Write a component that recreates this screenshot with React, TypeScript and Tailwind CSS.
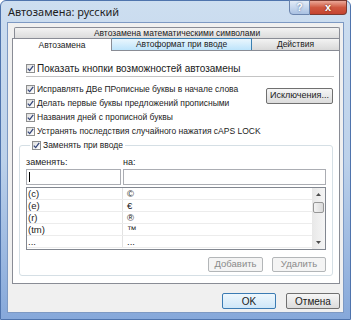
import React from "react";

const Check = () => (
  <span className="w-[9px] h-[9px] border border-[#8e8f8f] bg-gradient-to-br from-[#dedede] to-white flex items-center justify-center shrink-0">
    <svg width="7" height="7" viewBox="0 0 7 7">
      <path d="M0.8 3.6 L2.7 5.6 L6.2 0.9" stroke="#34467a" strokeWidth="1.3" fill="none" />
    </svg>
  </span>
);

const Row = ({ text, big }: { text: string; big?: boolean }) => (
  <div className="h-[14px] flex items-center gap-[2px]">
    <Check />
    <span className={`whitespace-nowrap ${big ? "text-[10px]" : "text-[8.5px]"}`}>{text}</span>
  </div>
);

const Btn = ({ children, w, disabled, def }: { children: React.ReactNode; w: string; disabled?: boolean; def?: boolean }) => {
  if (disabled)
    return (
      <div className={`${w} h-[15px] rounded-[2px] border border-[#b3b6b8] bg-[#f4f4f4] text-[#8a8a8a] flex items-center justify-center`}>
        {children}
      </div>
    );
  return (
    <div
      className={`${w} h-[16px] shrink-0 rounded-[2px] border ${def ? "border-[#3b7bb3] from-[#eef7fd] to-[#cfe7f8]" : "border-[#707070] from-[#f6f6f6] to-[#dcdcdc]"} bg-gradient-to-b flex items-center justify-center whitespace-nowrap`}
    >
      {children}
    </div>
  );
};

const items = [
  ["(c)", "©\uFE0E"],
  ["(e)", "€"],
  ["(r)", "®\uFE0E"],
  ["(tm)", "™\uFE0E"],
  ["...", "..."],
];

export default function App() {
  return (
    <div className="w-[351px] h-[320px] overflow-hidden bg-white font-['Liberation_Sans',Arial,sans-serif] text-[#1b1b1b] text-[9.5px]">
      <div className="h-full flex flex-col rounded-t-[6px] border border-[#4f74ad] bg-gradient-to-b from-[#cddef0] via-[#bcd1ea] to-[#86a8da]">
        {/* title bar */}
        <div className="h-[21px] flex items-start justify-between pl-[7px]">
          <span className="font-['Noto_Sans',sans-serif] text-[11px] leading-[21px] text-[#1e1e1e]">Автозамена: русский</span>
          <div className="flex mr-[3px] -mt-px">
            <div className="w-[21px] h-[15px] rounded-bl-[4px] border border-[#6a84ad] bg-gradient-to-b from-[#e3ecf7] to-[#a9c1e2] flex items-center justify-center text-[10px] font-bold text-white [text-shadow:0_0_2px_#3c5a8a]">
              ?
            </div>
            <div className="w-[37px] h-[15px] rounded-br-[4px] border border-l-0 border-[#7b3a30] bg-gradient-to-b from-[#eaa898] via-[#cf5840] to-[#c54330] flex items-center justify-center text-[11px] font-bold text-white [text-shadow:0_0_2px_#5a1a10]">
              x
            </div>
          </div>
        </div>

        {/* client */}
        <div className="mx-[6px] mb-[6px] flex-1 bg-[#f0f0f0] border border-[#7d99c3] flex flex-col">
          <div className="ml-[4px] mt-[4px] w-[328px]">
            {/* top tab row */}
            <div className="ml-[2px] w-[326px] h-[11px] border border-b-0 border-[#898c95] rounded-t-[2px] bg-gradient-to-b from-[#f3f3f3] to-[#dcdcdc] flex items-center justify-center text-[8.5px] leading-none">
              Автозамена математическими символами
            </div>
            {/* second tab row */}
            <div className="h-[12px] flex items-start text-[8.5px] leading-none">
              <div className="w-[100px] h-[13px] border border-b-0 border-[#898c95] bg-white flex items-center justify-center relative z-10">
                Автозамена
              </div>
              <div className="w-[140px] h-[12px] border border-l-0 border-b-0 border-[#3c7fb1] bg-gradient-to-b from-[#eaf6fd] to-[#bde4fb] flex items-center justify-center">
                Автоформат при вводе
              </div>
              <div className="w-[88px] h-[12px] border border-l-0 border-b-0 border-[#898c95] bg-gradient-to-b from-[#f3f3f3] to-[#d9d9d9] flex items-center justify-center">
                Действия
              </div>
            </div>
            {/* panel */}
            <div className="h-[234px] border border-[#898c95] bg-white flex flex-col">
              <div className="mt-[10px] pl-[13px]">
                <Row big text="Показать кнопки возможностей автозамены" />
              </div>
              <div className="mt-[1px] ml-[13px] w-[308px] border-t border-[#c4c4c4]" />
              <div className="mt-[5px] flex">
                <div className="pl-[13px] flex flex-col">
                  <Row text="Исправлять ДВе ПРописные буквы в начале слова" />
                  <Row text="Делать первые буквы предложений прописными" />
                  <Row text="Названия дней с прописной буквы" />
                  <Row text="Устранять последствия случайного нажатия cAPS LOCK" />
                </div>
                <div className="ml-auto mr-[6px] mt-[6px] text-[9px]">
                  <Btn w="w-[67px]">Исключения...</Btn>
                </div>
              </div>
              <fieldset className="ml-[6px] w-[314px] border border-[#d5dfe5] rounded-[3px] px-[6px] pb-[3px]">
                <legend className="ml-[4px] px-[2px]">
                  <Row text="Заменять при вводе" />
                </legend>
                <div className="mt-[5px] h-[11px] flex items-center text-[9px]">
                  <span className="w-[97px]">заменять:</span>
                  <span>на:</span>
                </div>
                <div className="mt-[1px] flex gap-[2px]">
                  <div className="w-[95px] h-[16px] border border-[#abadb3] bg-white flex items-center pl-[2px]">
                    <span className="w-px h-[10px] bg-black" />
                  </div>
                  <div className="w-[203px] h-[16px] border border-[#abadb3] bg-white" />
                </div>
                <div className="mt-[2px] h-[63px] border border-[#828790] bg-white flex">
                  <div className="flex-1 flex flex-col">
                    {items.map(([a, b]) => (
                      <div key={a} className="h-[12px] flex border-b border-[#ececec] leading-none">
                        <span className="w-[96px] pl-[1px] border-r border-[#e2e2e2] flex items-center">{a}</span>
                        <span className="pl-[4px] flex items-center">{b}</span>
                      </div>
                    ))}
                  </div>
                  <div className="w-[13px] bg-gradient-to-r from-[#e8e8e8] to-[#f5f5f5] flex flex-col items-center">
                    <svg className="mt-[5px]" width="5" height="3" viewBox="0 0 5 3">
                      <path d="M0 3 L2.5 0 L5 3 Z" fill="#4d4d4d" />
                    </svg>
                    <div className="mt-[6px] w-[11px] h-[11px] rounded-[2px] border border-[#979797] bg-gradient-to-r from-[#f3f3f3] to-[#dadada]" />
                    <svg className="mt-auto mb-[5px]" width="5" height="3" viewBox="0 0 5 3">
                      <path d="M0 0 L2.5 3 L5 0 Z" fill="#4d4d4d" />
                    </svg>
                  </div>
                </div>
                <div className="mt-[7px] flex justify-end gap-[9px]">
                  <Btn w="w-[55px]" disabled>Добавить</Btn>
                  <Btn w="w-[54px]" disabled>Удалить</Btn>
                </div>
              </fieldset>
            </div>
          </div>
          <div className="mt-[9px] mr-[3px] flex justify-end gap-[10px] text-[10px]">
            <Btn w="w-[54px]" def>OK</Btn>
            <Btn w="w-[54px]">Отмена</Btn>
          </div>
        </div>
      </div>
    </div>
  );
}
